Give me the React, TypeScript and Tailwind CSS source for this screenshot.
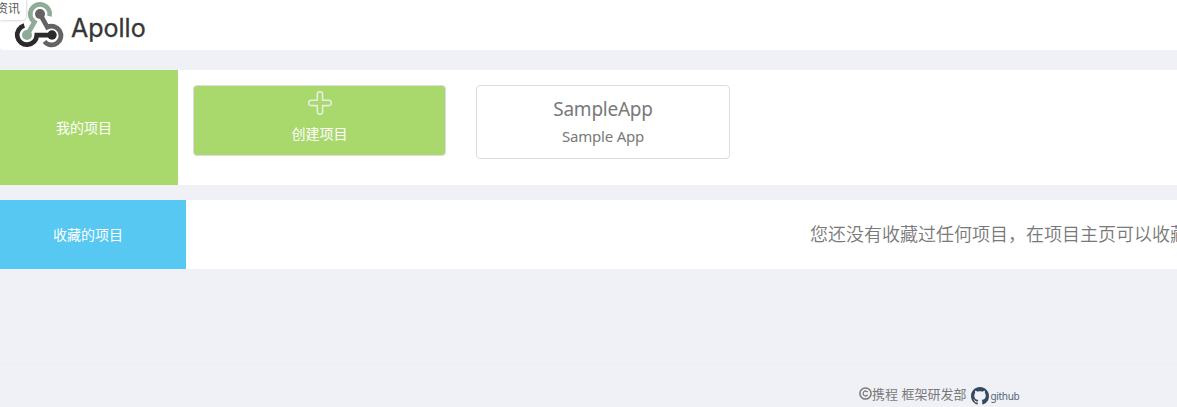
import React from "react";

function ApolloMark() {
  return (
    <svg className="ml-[14px] h-[50px] w-[51px] shrink-0" viewBox="14 0 51 50" fill="none" strokeWidth="4.7">
      <path d="M49.6 16.2A9.8 9.8 0 1 0 34.4 22.2L27 35" stroke="#8fab98" />
      <circle cx="27" cy="35" r="5" fill="#8fab98" />
      <path d="M24.3 25.4A9.8 9.8 0 1 0 36.8 35.1H52" stroke="#2b2b2b" />
      <circle cx="52" cy="35" r="4.7" fill="#2b2b2b" />
      <path d="M40 14L47.3 27.2A9.4 9.4 0 1 1 44.4 41.6" stroke="#636363" />
      <circle cx="40" cy="14" r="5" fill="#636363" />
    </svg>
  );
}

function PlusOutline() {
  return (
    <svg className="h-6 w-6" viewBox="0 0 24 24" fill="none" stroke="#e6edde" strokeWidth="1.6">
      <path d="M9.3 9.3V3.3a2.65 2.65 0 0 1 5.3 0V9.3H20.7a2.65 2.65 0 0 1 0 5.3H14.6V20.7a2.65 2.65 0 0 1-5.3 0V14.6H3.3a2.65 2.65 0 0 1 0-5.3Z" />
    </svg>
  );
}

function GithubMark() {
  return (
    <svg className="h-[18px] w-[18px]" viewBox="0 0 16 16" fill="#34495e">
      <path d="M8 0C3.58 0 0 3.58 0 8c0 3.54 2.29 6.53 5.47 7.59.4.07.55-.17.55-.38 0-.19-.01-.82-.01-1.49-2.01.37-2.53-.49-2.69-.94-.09-.23-.48-.94-.82-1.13-.28-.15-.68-.52-.01-.53.63-.01 1.08.58 1.23.82.72 1.21 1.87.87 2.33.66.07-.52.28-.87.51-1.07-1.78-.2-3.64-.89-3.64-3.95 0-.87.31-1.59.82-2.15-.08-.2-.36-1.02.08-2.12 0 0 .67-.21 2.2.82.64-.18 1.32-.27 2-.27s1.36.09 2 .27c1.53-1.04 2.2-.82 2.2-.82.44 1.1.16 1.92.08 2.12.51.56.82 1.27.82 2.15 0 3.07-1.87 3.75-3.65 3.95.29.25.54.73.54 1.48 0 1.07-.01 1.93-.01 2.2 0 .21.15.46.55.38A8.01 8.01 0 0 0 16 8c0-4.42-3.58-8-8-8Z" />
    </svg>
  );
}

function CopyrightMark() {
  return (
    <svg className="h-[13px] w-[13px]" viewBox="0 0 13 13" fill="none" stroke="#797979">
      <circle cx="6.5" cy="6.5" r="5.6" strokeWidth="1.5" />
      <path d="M8.7 5.1A2.5 2.5 0 1 0 8.7 7.9" strokeWidth="1.3" />
    </svg>
  );
}

export default function App() {
  return (
    <div className="flex h-[407px] w-full flex-col overflow-hidden bg-[#f0f1f7] font-['Noto_Sans','Noto_Sans_CJK_SC',sans-serif] text-sm text-[#797979]">
      <header className="relative flex h-[50px] shrink-0 rounded-bl bg-white">
        <ApolloMark />
        <span className="ml-[6px] mt-[11px] font-[family-name:Inter,sans-serif] text-[25px] leading-[34px] text-[#363636] [-webkit-text-stroke:0.3px_#363636]">
          Apollo
        </span>
        <div className="absolute left-0 top-0 flex h-5 w-[26px] justify-end rounded-br bg-white pr-[6px] text-xs leading-[17px] whitespace-nowrap text-[#555] shadow-[0_0_3px_rgba(0,0,0,0.3)]">
          资讯
        </div>
      </header>

      <section className="mt-5 flex h-[115px] shrink-0 bg-white">
        <div className="flex w-[178px] shrink-0 justify-center bg-[#a9d96c] pr-[10px] pt-[48px] leading-5 text-white">
          我的项目
        </div>
        <div className="flex items-start gap-[30px] pl-[15px] pt-[15px]">
          <div className="flex h-[71px] w-[253px] flex-col items-center rounded border border-[#ddd] bg-[#a9d96c] pt-[5px] text-white">
            <PlusOutline />
            <span className="mt-[9px] leading-5">创建项目</span>
          </div>
          <div className="flex h-[74px] w-[254px] flex-col items-center rounded border border-[#ddd] bg-white">
            <span className="mt-[9px] text-[19px] leading-7 tracking-[-0.25px]">SampleApp</span>
            <span className="mt-[3px] text-[15px] leading-5 tracking-[-0.2px]">Sample App</span>
          </div>
        </div>
      </section>

      <section className="mt-[15px] flex h-[69px] shrink-0 bg-white">
        <div className="flex w-[186px] shrink-0 items-center justify-center bg-[#57c8f2] pr-[10px] text-white">
          收藏的项目
        </div>
        <p className="ml-[624px] whitespace-nowrap text-[18px] leading-[69px] font-[350]">
          您还没有收藏过任何项目，在项目主页可以收藏项目
        </p>
      </section>

      <footer className="mt-[95px] flex h-[43px] shrink-0 items-start border-t border-[#eceeee] pl-[859px] pt-[19px]">
        <span className="pt-[3px]"><CopyrightMark /></span>
        <span className="whitespace-nowrap text-[13px] leading-5">携程 框架研发部</span>
        <span className="ml-[5px] mt-[3px]"><GithubMark /></span>
        <span className="mt-[2px] ml-px font-[family-name:Noto_Sans,sans-serif] text-[10px] leading-5 tracking-[-0.3px] text-[#50647a]">github</span>
      </footer>
    </div>
  );
}
